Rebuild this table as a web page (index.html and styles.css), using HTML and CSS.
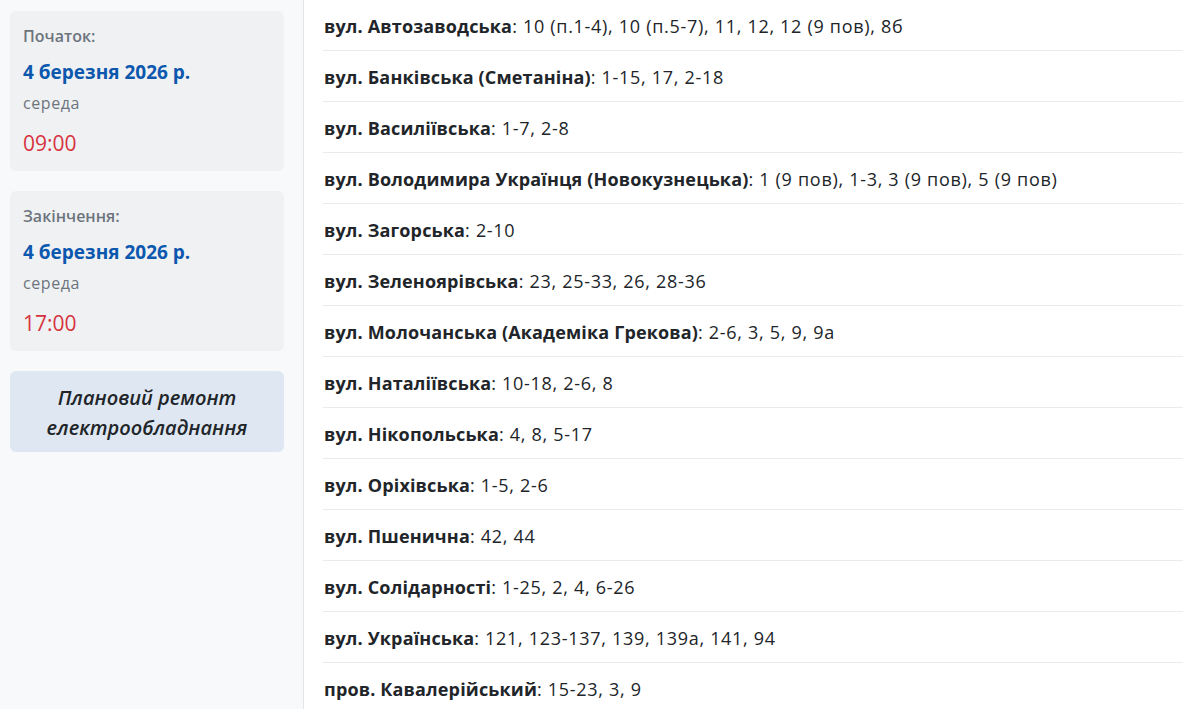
FILE: index.html
```html
<!DOCTYPE html>
<html lang="uk">
<head>
<meta charset="utf-8">
<link rel="stylesheet" href="styles.css">
</head>
<body>
<div class="layout">
  <aside class="sidebar">
    <div class="card">
      <div class="label">Початок:</div>
      <div class="date">4 березня 2026 р.</div>
      <div class="weekday">середа</div>
      <div class="time">09:00</div>
    </div>
    <div class="card">
      <div class="label">Закінчення:</div>
      <div class="date">4 березня 2026 р.</div>
      <div class="weekday">середа</div>
      <div class="time">17:00</div>
    </div>
    <div class="reason">Плановий ремонт електрообладнання</div>
  </aside>
  <main class="content">
    <ul class="streets">
      <li><b>вул. Автозаводська</b>: 10 (п.1-4), 10 (п.5-7), 11, 12, 12 (9 пов), 8б</li>
      <li><b>вул. Банківська (Сметаніна)</b>: 1-15, 17, 2-18</li>
      <li><b>вул. Василіївська</b>: 1-7, 2-8</li>
      <li><b>вул. Володимира Українця (Новокузнецька)</b>: 1 (9 пов), 1-3, 3 (9 пов), 5 (9 пов)</li>
      <li><b>вул. Загорська</b>: 2-10</li>
      <li><b>вул. Зеленоярівська</b>: 23, 25-33, 26, 28-36</li>
      <li><b>вул. Молочанська (Академіка Грекова)</b>: 2-6, 3, 5, 9, 9а</li>
      <li><b>вул. Наталіївська</b>: 10-18, 2-6, 8</li>
      <li><b>вул. Нікопольська</b>: 4, 8, 5-17</li>
      <li><b>вул. Оріхівська</b>: 1-5, 2-6</li>
      <li><b>вул. Пшенична</b>: 42, 44</li>
      <li><b>вул. Солідарності</b>: 1-25, 2, 4, 6-26</li>
      <li><b>вул. Українська</b>: 121, 123-137, 139, 139а, 141, 94</li>
      <li><b>пров. Кавалерійський</b>: 15-23, 3, 9</li>
    </ul>
  </main>
</div>
</body>
</html>
```
FILE: styles.css
```css
* { box-sizing: border-box; }
html, body { margin: 0; padding: 0; }
body {
  font-family: "Open Sans", "Noto Sans", sans-serif;
  color: #212529;
  background: #fff;
  overflow: hidden;
}
.layout {
  display: flex;
  height: 709px;
}
.sidebar {
  width: 304px;
  flex: none;
  background: #f8f9fa;
  border-right: 1px solid #e3e5e8;
  padding: 11px 19px 0 10px;
  display: flex;
  flex-direction: column;
  gap: 20px;
}
.card {
  background: #f0f1f3;
  border-radius: 6px;
  padding: 13px 13px 0 13px;
  height: 160px;
}
.label {
  font-size: 16px;
  font-weight: 600;
  color: #6c757d;
  line-height: 24px;
}
.date {
  margin-top: 12px;
  font-size: 19px;
  font-weight: 700;
  color: #0b58ae;
  line-height: 24px;
}
.weekday {
  margin-top: 7px;
  font-size: 16px;
  letter-spacing: 0.6px;
  color: #6c757d;
  line-height: 24px;
}
.time {
  margin-top: 14px;
  font-size: 21px;
  color: #d63340;
  line-height: 28px;
}
.reason {
  background: #dfe8f2;
  border-radius: 6px;
  height: 81px;
  padding: 3px 20px 0;
  display: flex;
  align-items: center;
  justify-content: center;
  text-align: center;
  font-style: italic;
  font-weight: 600;
  font-size: 20px;
  line-height: 30px;
  color: #212529;
}
.content {
  flex: 1;
  padding: 0 0 0 19px;
}
.streets {
  list-style: none;
  margin: 0;
  padding: 0;
}
.streets li {
  font-size: 18px;
  letter-spacing: 0.7px;
  line-height: 27px;
  padding: 13px 0 10px 1px;
  border-bottom: 1px solid #e9ecef;
  white-space: nowrap;
}
.streets b {
  font-weight: 700;
  letter-spacing: 0.15px;
}
```
